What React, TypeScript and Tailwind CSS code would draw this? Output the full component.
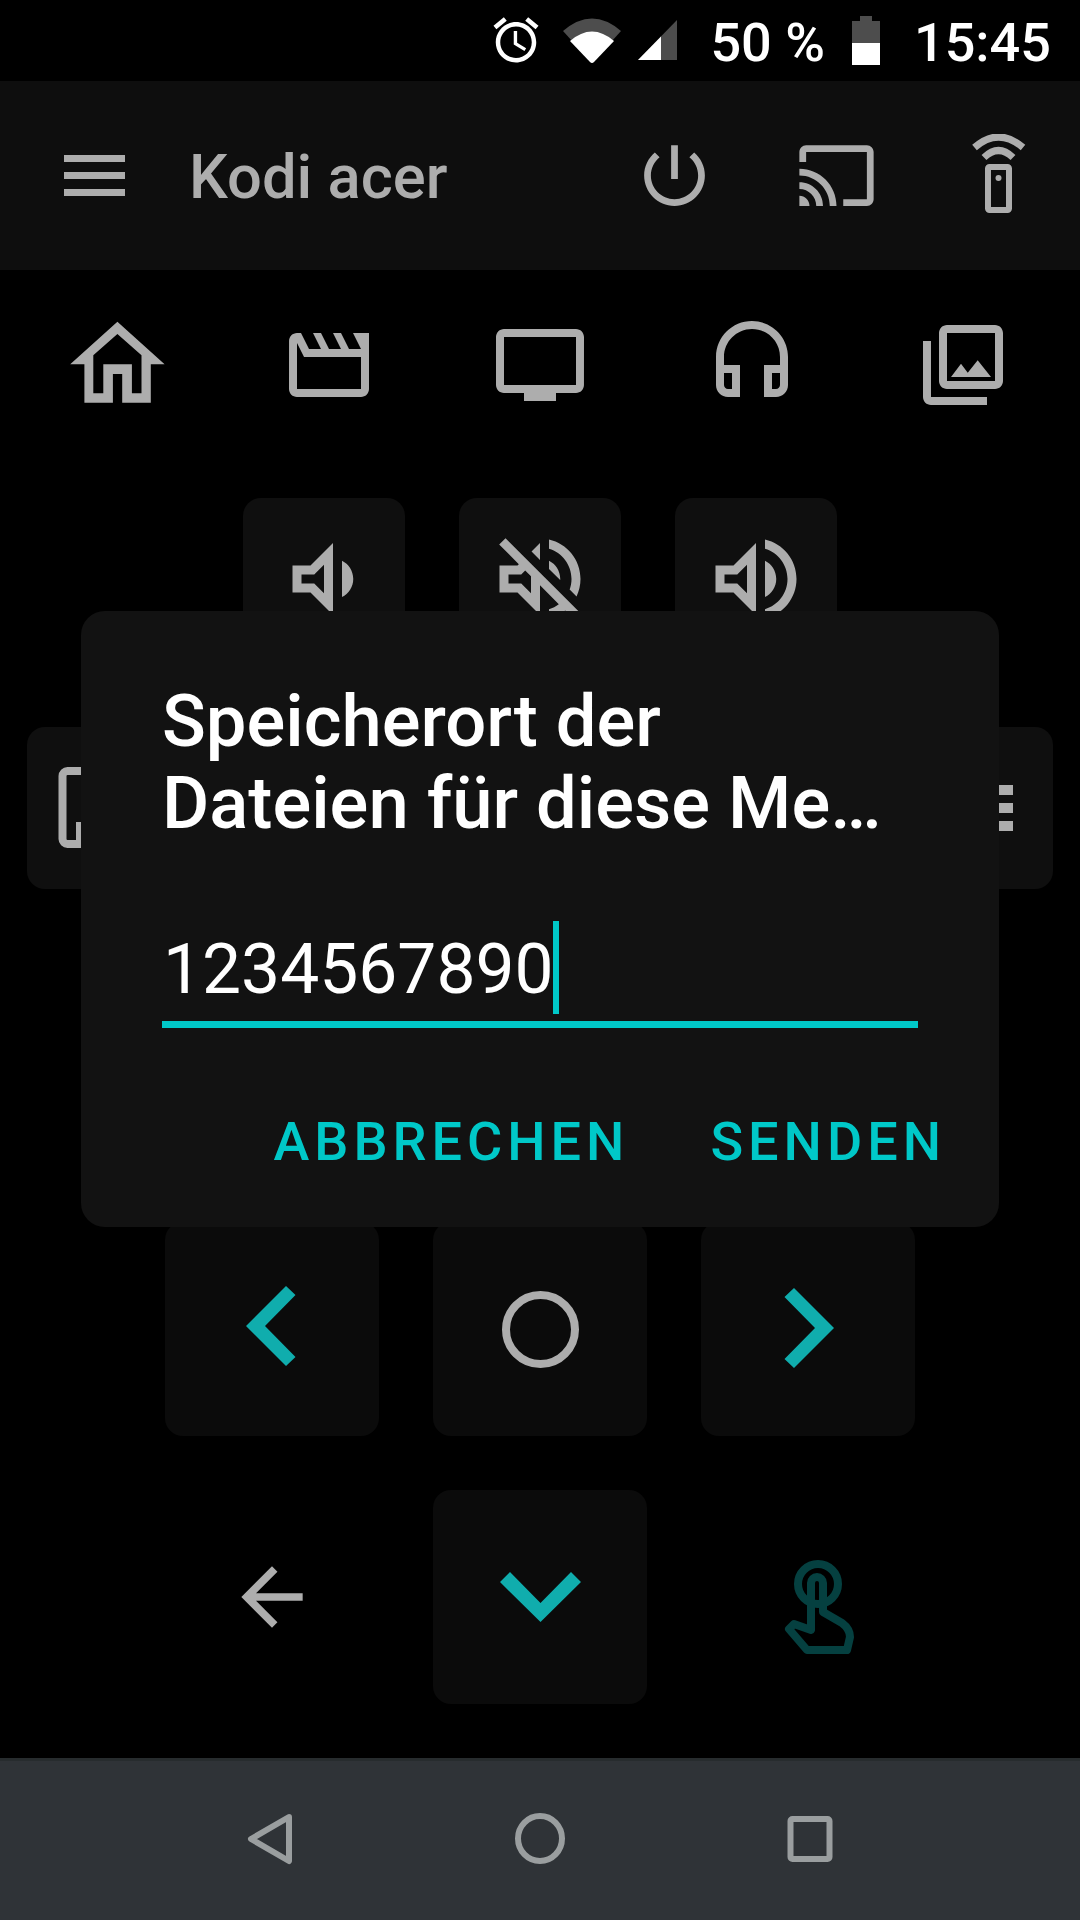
import React from 'react';

const FONT = "font-['Roboto','Liberation_Sans',sans-serif]";

const Mi = ({ d, className }: { d: string; className: string }) => (
  <svg viewBox="0 0 24 24" fill="currentColor" className={className}>
    <path d={d} />
  </svg>
);

const ICONS = {
  alarm:
    'M22 5.72l-4.6-3.86-1.29 1.53 4.6 3.86L22 5.72zM7.88 3.39L6.6 1.86 2 5.71l1.29 1.53 4.59-3.85zM12.5 8H11v6l4.75 2.85.75-1.23-4-2.37V8zM12 4c-4.97 0-9 4.03-9 9s4.02 9 9 9c4.97 0 9-4.03 9-9s-4.03-9-9-9zm0 16c-3.87 0-7-3.13-7-7s3.13-7 7-7 7 3.13 7 7-3.13 7-7 7z',
  power:
    'M13 3h-2v10h2V3zm4.83 2.17l-1.42 1.42C17.99 7.86 19 9.81 19 12c0 3.87-3.13 7-7 7s-7-3.13-7-7c0-2.19 1.01-4.14 2.58-5.42L6.17 5.17C4.23 6.82 3 9.26 3 12c0 4.97 4.03 9 9 9s9-4.03 9-9c0-2.74-1.23-5.18-3.17-6.83z',
  cast: 'M21 3H3c-1.1 0-2 .9-2 2v3h2V5h18v14h-7v2h7c1.1 0 2-.9 2-2V5c0-1.1-.9-2-2-2zM1 18v3h3c0-1.66-1.34-3-3-3zm0-4v2c2.76 0 5 2.24 5 5h2c0-3.87-3.13-7-7-7zm0-4v2c4.97 0 9 4.03 9 9h2c0-6.08-4.93-11-11-11z',
  movie:
    'M4 6.47L5.76 10H20v8H4V6.47M22 4h-4l2 4h-3l-2-4h-2l2 4h-3l-2-4H8l2 4H7L5 4H4c-1.1 0-1.99.9-1.99 2L2 18c0 1.1.9 2 2 2h16c1.1 0 2-.9 2-2V4z',
  tv: 'M21 3H3c-1.1 0-2 .9-2 2v12c0 1.1.9 2 2 2h5v2h8v-2h5c1.1 0 1.99-.9 1.99-2L23 5c0-1.1-.9-2-2-2zm0 14H3V5h18v12z',
  headset:
    'M12 1c-4.97 0-9 4.03-9 9v7c0 1.66 1.34 3 3 3h3v-8H5v-2c0-3.87 3.13-7 7-7s7 3.13 7 7v2h-4v8h3c1.66 0 3-1.34 3-3v-7c0-4.97-4.03-9-9-9zM7 14v4H6c-.55 0-1-.45-1-1v-3h2zm12 3c0 .55-.45 1-1 1h-1v-4h2v3z',
  photos:
    'M20 4v12H8V4h12m0-2H8c-1.1 0-2 .9-2 2v12c0 1.1.9 2 2 2h12c1.1 0 2-.9 2-2V4c0-1.1-.9-2-2-2zm-8.5 9.67l1.69 2.26 2.48-3.1L19 15H9zM2 6v14c0 1.1.9 2 2 2h14v-2H4V6H2z',
  volDown:
    'M16 7.97v8.05c1.48-.73 2.5-2.25 2.5-4.02 0-1.77-1.02-3.29-2.5-4.03zM5 9v6h4l5 5V4L9 9H5zm7-.17v6.34L9.83 13H7v-2h2.83L12 8.83z',
  volMute:
    'M4.34 2.93L2.93 4.34 7.29 8.7 7 9H3v6h4l5 5v-6.59l4.18 4.18c-.65.49-1.38.88-2.18 1.11v2.06c1.34-.3 2.57-.92 3.61-1.75l2.05 2.05 1.41-1.41L4.34 2.93zM10 15.17L7.83 13H5v-2h2.83l.88-.88L10 11.41v3.76zM19 12c0 .82-.15 1.61-.41 2.34l1.53 1.53c.56-1.17.88-2.48.88-3.87 0-4.28-2.99-7.86-7-8.77v2.06c2.89.86 5 3.54 5 6.71zm-7-8l-1.88 1.88L12 7.76zm4.5 8c0-1.77-1.02-3.29-2.5-4.03v1.79l2.48 2.48c.01-.08.02-.16.02-.24z',
  volUp:
    'M3 9v6h4l5 5V4L7 9H3zm7-.17v6.34L7.83 13H5v-2h2.83L10 8.83zM14 7.97v8.05c1.48-.73 2.5-2.25 2.5-4.02 0-1.77-1.02-3.29-2.5-4.03zM14 3.23v2.06c2.89.86 5 3.54 5 6.71s-2.11 5.85-5 6.71v2.06c4.01-.91 7-4.49 7-8.77 0-4.28-2.99-7.86-7-8.77z',
  arrowBack: 'M20 11H7.83l5.59-5.59L12 4l-8 8 8 8 1.41-1.41L7.83 13H20v-2z',
};

const StatusBar = () => (
  <div className={`${FONT} flex h-[81px] items-center justify-end bg-black pr-[29px] text-white`}>
    <Mi d={ICONS.alarm} className="mt-[-1px] h-[54px] w-[54px]" />
    <svg viewBox="562 16 58 47" className="ml-[20px] h-[47px] w-[58px]">
      <path d="M562 30Q591 5 620 30L591 62Z" fill="#4d4d4d" />
      <path d="M569 40Q591 21 613 40L593 61Q591 63 589 61Z" fill="#fff" />
    </svg>
    <svg viewBox="639 22 39 41" className="ml-[17px] h-[41px] w-[39px]">
      <path d="M639 62L678 22V62Z" fill="#4d4d4d" />
      <path d="M639 62L662 38.5V62Z" fill="#fff" />
    </svg>
    <span className="ml-[33px] mt-[4px] text-[54px] font-medium leading-none">50 %</span>
    <svg viewBox="851 16 28 49" className="ml-[27px] h-[49px] w-[28px]">
      <path d="M859 16H871V21H879V43H851V21H859Z" fill="#4d4d4d" />
      <rect x="851" y="43" width="28" height="22" fill="#fff" />
    </svg>
    <span className="ml-[34px] mt-[4px] text-[54px] font-medium leading-none">15:45</span>
  </div>
);

const AppBar = () => (
  <div className={`${FONT} flex h-[189px] items-center bg-[#0e0e0e] pl-[64px] pr-[41px] text-[#adadad]`}>
    <svg viewBox="0 0 61 41" className="h-[41px] w-[61px]" fill="currentColor">
      <rect width="61" height="7" />
      <rect y="17" width="61" height="7" />
      <rect y="34" width="61" height="7" />
    </svg>
    <span className="ml-[64px] mt-[4px] text-[61.5px] font-medium leading-none">Kodi acer</span>
    <Mi d={ICONS.power} className="ml-auto h-[81px] w-[81px]" />
    <Mi d={ICONS.cast} className="ml-[81px] h-[81px] w-[81px]" />
    <svg viewBox="958 134 81 79" className="ml-[81px] mt-[-4px] h-[79px] w-[81px]" fill="none" stroke="currentColor">
      <path d="M974.5 147.5Q998.5 126.5 1023 147.5" strokeWidth="7" />
      <path d="M984 157.5Q998.5 143.5 1013 157.5" strokeWidth="7" />
      <rect x="988" y="167" width="21" height="43" rx="1.5" strokeWidth="6" />
      <circle cx="998.5" cy="178" r="3" fill="currentColor" stroke="none" />
    </svg>
  </div>
);

const SectionIcons = () => (
  <div className="flex items-start justify-between pl-[69px] pr-[69px] pt-[47px] text-[#adadad]">
    <svg viewBox="69 317 96 96" className="h-[96px] w-[96px] overflow-visible" fill="currentColor">
      <path
        fillRule="evenodd"
        d="M117.4 321.7L70.2 364.3H84.4V402.7H112.9V374H122.2V402.7H150.8V364.3H164.6ZM117.4 334L93.3 355.3V393.3H103.3V364.3H131.9V393.3H141.5V355.3Z"
      />
    </svg>
    <Mi d={ICONS.movie} className="h-[96px] w-[96px]" />
    <Mi d={ICONS.tv} className="h-[96px] w-[96px]" />
    <Mi d={ICONS.headset} className="h-[96px] w-[96px]" />
    <Mi d={ICONS.photos} className="h-[96px] w-[96px]" />
  </div>
);

const SmallButton = ({ children }: { children: React.ReactNode }) => (
  <div className="flex h-[162px] w-[162px] items-center justify-center rounded-[18px] bg-[#0f0f0f] text-[#adadad]">
    {children}
  </div>
);

const PadButton = ({ children }: { children?: React.ReactNode }) => (
  <div className="flex h-[214px] w-[214px] items-center justify-center rounded-[18px] bg-[#0b0b0b]">
    {children}
  </div>
);

const Remote = () => (
  <div className="flex flex-col">
    <div className="mt-[85px] flex justify-center gap-[54px]">
      <SmallButton>
        <Mi d={ICONS.volDown} className="h-[108px] w-[108px]" />
      </SmallButton>
      <SmallButton>
        <Mi d={ICONS.volMute} className="h-[108px] w-[108px]" />
      </SmallButton>
      <SmallButton>
        <Mi d={ICONS.volUp} className="h-[108px] w-[108px]" />
      </SmallButton>
    </div>
    <div className="mt-[67px] flex justify-between px-[27px]">
      <SmallButton>
        <svg viewBox="54 754 108 108" className="h-[108px] w-[108px]" fill="none" stroke="currentColor" strokeWidth="8">
          <rect x="62.5" y="771" width="90" height="73" rx="5" />
          <path d="M78.5 822V840" strokeWidth="5" />
        </svg>
      </SmallButton>
      <SmallButton>
        <svg viewBox="918 754 108 108" className="h-[108px] w-[108px]" fill="currentColor">
          <rect x="950" y="785" width="63" height="10" />
          <rect x="950" y="803" width="63" height="10" />
          <rect x="950" y="821" width="63" height="10" />
        </svg>
      </SmallButton>
    </div>
    <div className="mt-[65px] flex justify-center">
      <PadButton />
    </div>
    <div className="mt-[54px] flex justify-center gap-[54px]">
      <PadButton>
        <svg viewBox="0 0 50 80" className="mr-[3px] mt-[-7px] h-[80px] w-[50px]" fill="#10adad">
          <path d="M0 40L40 0L49.5 9L19 40L49.5 71L40 80Z" />
        </svg>
      </PadButton>
      <PadButton>
        <div className="h-[77px] w-[77px] rounded-full border-[8px] border-[#adadad]" />
      </PadButton>
      <PadButton>
        <svg viewBox="0 0 50 80" className="ml-[2px] mt-[-3px] h-[80px] w-[50px]" fill="#10adad">
          <path d="M50 40L10 0L0.5 9L31 40L0.5 71L10 80Z" />
        </svg>
      </PadButton>
    </div>
    <div className="mt-[54px] flex justify-center gap-[54px]">
      <div className="flex w-[214px] items-center justify-center text-[#adadad]">
        <Mi d={ICONS.arrowBack} className="h-[92px] w-[92px]" />
      </div>
      <PadButton>
        <svg viewBox="0 0 81 50" className="h-[50px] w-[81px]" fill="#10adad">
          <path d="M0 10L10 0L40.5 31L71 0L81 10L40.5 50Z" />
        </svg>
      </PadButton>
      <div className="flex w-[214px] items-center justify-center">
        <svg viewBox="780 1555 80 104" className="ml-[22px] mt-[20px] h-[104px] w-[80px]" fill="none" stroke="#054040" strokeWidth="8">
          <ellipse cx="819" cy="1584" rx="20" ry="20" />
          <path d="M812 1630V1583A6 6 0 0 1 824 1583V1612L843 1623Q851 1629 851 1637L848 1650H808L790 1629L795 1624Z" strokeLinejoin="round" />
        </svg>
      </div>
    </div>
  </div>
);

const Dialog = () => (
  <div className={`${FONT} absolute left-[81px] top-[611px] flex h-[616px] w-[918px] flex-col rounded-[24px] bg-[#121212]`}>
    <div className="pl-[81px] pt-[70px] text-[72.4px] font-medium leading-[82px] text-white">
      Speicherort der
      <br />
      Dateien für diese Me…
    </div>
    <div className="ml-[81px] mt-[80px] flex h-[103px] w-[756px] items-end border-b-[7px] border-[#00c8c8] pb-[7px]">
      <span className="mb-[-2px] ml-[1px] text-[69.5px] leading-[93px] text-white">1234567890</span>
      <span className="ml-[-1px] h-[93px] w-[6px] bg-[#00c8c8]" />
    </div>
    <div className="mt-[84px] flex justify-end pr-[53px] text-[54px] font-medium leading-[60px] tracking-[5px] text-[#00c8c8]">
      <span>ABBRECHEN</span>
      <span className="ml-[81px]">SENDEN</span>
    </div>
  </div>
);

const NavBar = () => (
  <div className="mt-[54px] flex h-[162px] items-start border-t-[3px] border-[#272c2e] bg-[#2f3337]">
    <svg viewBox="0 159 1080 159" className="h-[159px] w-full" fill="none" stroke="#9a9e9f" strokeWidth="6" strokeLinejoin="round">
      <path d="M289 215L251 237L289 259Z" />
      <ellipse cx="540" cy="236.5" rx="22" ry="22.5" />
      <rect x="790.5" y="217" width="39" height="40" rx="2" />
    </svg>
  </div>
);

export default function App() {
  return (
    <div className="relative h-[1920px] w-[1080px] overflow-hidden bg-black">
      <StatusBar />
      <AppBar />
      <SectionIcons />
      <Remote />
      <NavBar />
      <Dialog />
    </div>
  );
}
